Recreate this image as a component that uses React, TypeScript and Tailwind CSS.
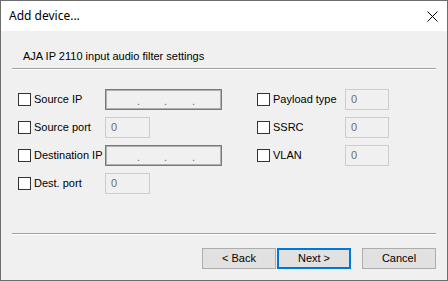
import React from 'react';

const font = { fontFamily: '"Liberation Sans", Arial, sans-serif' };

const Check: React.FC<{ label: string; labelW: string }> = ({ label, labelW }) => (
  <div className="flex items-center h-[21px]">
    <div className="w-[13px] h-[13px] border border-[#333333] bg-white shrink-0" />
    <span className={`${labelW} pl-[3px] text-[11px] leading-[13px] text-black whitespace-nowrap`}>{label}</span>
  </div>
);

const NumBox: React.FC<{ w: string }> = ({ w }) => (
  <div className={`${w} h-[21px] border border-[#cccccc] bg-[#f0f0f0] flex items-center pl-[5px] text-[11px] text-[#6d6d6d]`}>0</div>
);

const IpBox: React.FC = () => (
  <div className="w-[117px] h-[21px] border border-[#7a7a7a] shadow-[inset_0_0_0_1px_#b0b0b0] bg-[#f0f0f0] relative text-[11px] text-[#6d6d6d]">
    <span className="absolute left-[31px] top-[3px]">.</span>
    <span className="absolute left-[58px] top-[3px]">.</span>
    <span className="absolute left-[86px] top-[3px]">.</span>
  </div>
);

const Btn: React.FC<{ label: string; primary?: boolean; className?: string }> = ({ label, primary, className = '' }) => (
  <button
    className={`w-[74px] h-[21px] shrink-0 text-[11px] leading-none text-black bg-[#e1e1e1] ${primary ? 'border-2 border-[#0078d7]' : 'border border-[#adadad]'} ${className}`}
  >
    {label}
  </button>
);

export default function App() {
  return (
    <div className="w-[448px] h-[281px] border border-[#6d6d6d] bg-[#f0f0f0] flex flex-col" style={font}>
      <div className="h-[30px] bg-white flex items-center justify-between pl-[8px] pr-[9px] shrink-0">
        <span className="text-[12px] text-black" style={{ fontFamily: '"Noto Sans", "Liberation Sans", sans-serif' }}>Add device...</span>
        <svg width="11" height="11" viewBox="0 0 11 11">
          <path d="M0.5 0.5 L10.5 10.5 M10.5 0.5 L0.5 10.5" stroke="#000" strokeWidth="1" />
        </svg>
      </div>

      <div className="flex-1 flex flex-col px-[11px]">
        <div className="mt-[19px] pl-[11px] text-[11px] leading-[13px] text-black">
          AJA IP 2110 input audio filter settings
        </div>
        <div className="mt-[5px] border-t border-[#a0a0a0] border-b border-b-white" />

        <div className="mt-[19px] pl-[6px] flex">
          <div className="w-[239px] flex flex-col gap-[7px]">
            <div className="flex">
              <Check label="Source IP" labelW="w-[74px]" />
              <IpBox />
            </div>
            <div className="flex">
              <Check label="Source port" labelW="w-[74px]" />
              <NumBox w="w-[45px]" />
            </div>
            <div className="flex">
              <Check label="Destination IP" labelW="w-[74px]" />
              <IpBox />
            </div>
            <div className="flex">
              <Check label="Dest. port" labelW="w-[74px]" />
              <NumBox w="w-[45px]" />
            </div>
          </div>
          <div className="flex flex-col gap-[7px]">
            <div className="flex">
              <Check label="Payload type" labelW="w-[75px]" />
              <NumBox w="w-[44px]" />
            </div>
            <div className="flex">
              <Check label="SSRC" labelW="w-[75px]" />
              <NumBox w="w-[44px]" />
            </div>
            <div className="flex">
              <Check label="VLAN" labelW="w-[75px]" />
              <NumBox w="w-[44px]" />
            </div>
          </div>
        </div>

        <div className="mt-auto border-t border-[#a0a0a0] border-b border-b-white" />
        <div className="mt-[13px] mb-[11px] flex items-start justify-end">
          <Btn label="< Back" />
          <Btn label="Next >" primary className="ml-[1px]" />
          <Btn label="Cancel" className="ml-[11px]" />
        </div>
      </div>
    </div>
  );
}
